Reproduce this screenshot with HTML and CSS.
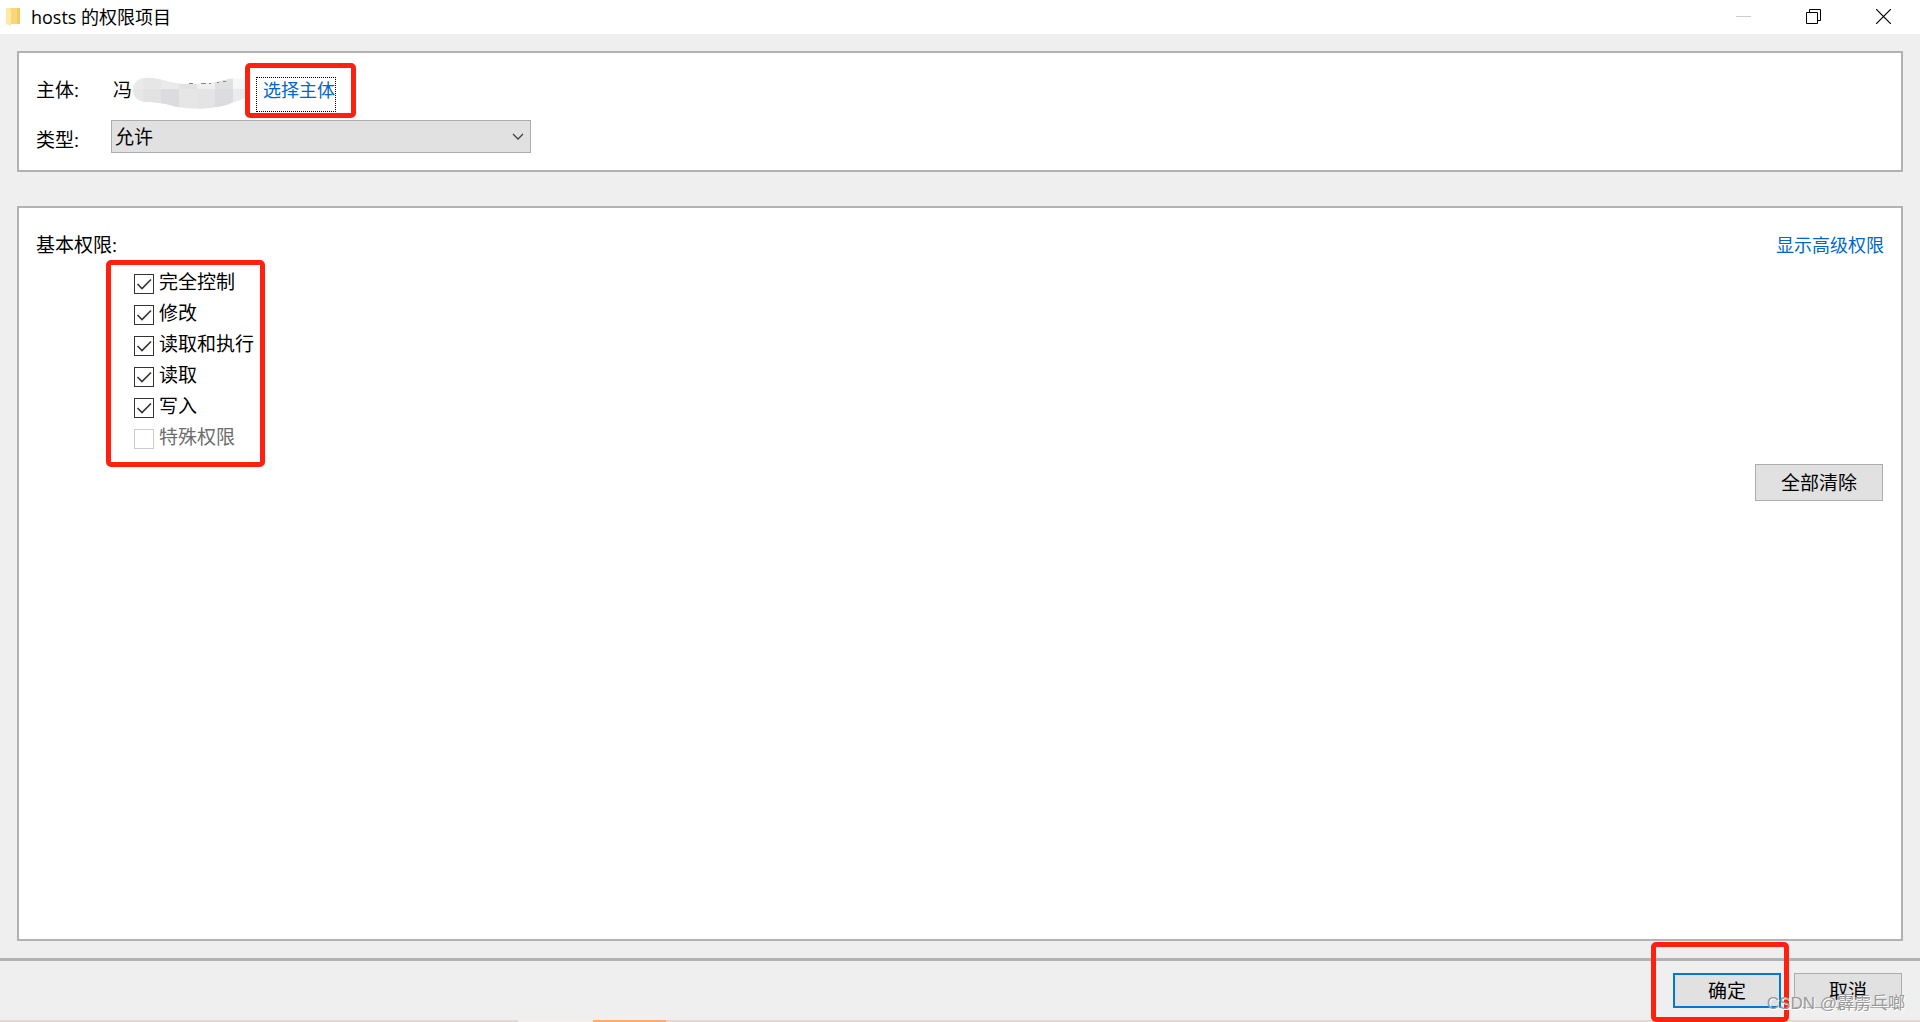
FILE: index.html
```html
<!DOCTYPE html>
<html lang="zh-CN">
<head>
<meta charset="utf-8">
<meta name="viewport" content="width=device-width, initial-scale=1">
<title>hosts 的权限项目</title>
<link rel="stylesheet" href="styles.css">
</head>
<body>
<header class="titlebar">
  <svg class="folder" width="14" height="20" viewBox="0 0 14 20" aria-hidden="true">
    <path d="M4 1h10v16H4z" fill="#f8d775"/>
    <path d="M11 1h3v16h-3z" fill="#f3cb62"/>
    <path d="M0 1h4l1 3v15l-5-2z" fill="#ffe9a6"/>
  </svg>
  <h1 class="title">hosts 的权限项目</h1>
  <div class="window-buttons">
    <button class="window-button" type="button" aria-label="最小化" disabled>
      <svg width="15" height="15" viewBox="0 0 15 15"><path d="M0 7.5h15" stroke="#ccc"/></svg>
    </button>
    <button class="window-button" type="button" aria-label="还原">
      <svg width="15" height="15" viewBox="0 0 15 15" fill="none" stroke="#000"><path d="M.5 3.500h11v11h-11zM3.500 3.500v-3h11v11h-3"/></svg>
    </button>
    <button class="window-button" type="button" aria-label="关闭">
      <svg width="15" height="15" viewBox="0 0 15 15"><path d="M0 0l15 15M15 0L0 15" stroke="#000" stroke-width="1.200"/></svg>
    </button>
  </div>
</header>

<main class="content">
  <section class="panel principal">
    <div class="row principal-row">
      <span class="label">主体:</span>
      <span class="name">冯
        <svg class="mosaic" width="118" height="32" viewBox="0 0 118 32" aria-hidden="true">
          <clipPath id="smear"><path d="M12 1C26-1 35 7 52 7S78 7 92 3C102 0 117 2 117 12C117 22 104 23 96 27C84 32 52 33 40 29C30 26 24 25 12 25C-4 24-4 2 12 1z"/></clipPath>
          <g clip-path="url(#smear)">
            <path d="M0 0h118v32H0z" fill="#e6e6e6"/>
            <path d="M0 0h10v12H0zM28 0h18v12H28z" fill="#eaeaea"/>
            <path d="M10 12h18v20H10zM46 0h18v12H46z" fill="#e2e2e2"/>
            <path d="M28 12h18v20H28zM82 12h18v20H82z" fill="#dcdcde"/>
            <path d="M64 12h18v20H64z" fill="#e4e4e4"/>
            <path d="M64 0h18v12H64z" fill="#efefef"/>
            <path d="M82 0h18v12H82z" fill="#e0e0e0"/>
            <path d="M100 0h18v12h-18z" fill="#f6f8f8"/>
            <path d="M100 12h18v20h-18z" fill="#e9ebed"/>
          </g>
          <path d="M56 6.500h4m8 0h5m3 0h2m6-1h2m4-1h3" stroke="#888"/>
        </svg>
      </span>
      <span class="marked"><a class="link focused" href="#principal">选择主体</a></span>
    </div>
    <div class="row">
      <label class="label type-label" for="type">类型:</label>
      <span class="select-box">
        <select id="type"><option>允许</option><option>拒绝</option></select>
        <svg class="chevron" width="12" height="8" viewBox="0 0 12 8" fill="none"><path d="M1 1l5 5 5-5" stroke="#404040" stroke-width="1.300"/></svg>
      </span>
    </div>
  </section>

  <section class="panel permissions">
    <div class="heading">
      <h2 class="subtitle">基本权限:</h2>
      <a class="link" href="#advanced">显示高级权限</a>
    </div>
    <div class="checks">
      <label class="check"><input type="checkbox" checked>完全控制</label>
      <label class="check"><input type="checkbox" checked>修改</label>
      <label class="check"><input type="checkbox" checked>读取和执行</label>
      <label class="check"><input type="checkbox" checked>读取</label>
      <label class="check"><input type="checkbox" checked>写入</label>
      <label class="check off"><input type="checkbox" disabled>特殊权限</label>
    </div>
    <button class="button clear" type="button">全部清除</button>
  </section>
</main>

<footer class="footer">
  <div class="actions">
    <span class="marked-button"><button class="button primary" type="button">确定</button></span>
    <button class="button" type="button">取消</button>
  </div>
  <span class="watermark">CSDN @霹雳乓啷</span>
  <div class="strip"><i class="strip-light"></i><i class="strip-orange"></i></div>
</footer>
</body>
</html>
```
FILE: styles.css
```css
* {
  box-sizing: border-box;
}

body {
  margin: 0;
  min-height: 100vh;
  display: flex;
  flex-direction: column;
  background: #efefef;
  color: #000;
  font: 19px/24px "Open Sans", "Noto Sans CJK SC", sans-serif;
}

button,
select,
input {
  font: inherit;
  color: inherit;
  margin: 0;
}

.titlebar {
  display: flex;
  align-items: flex-start;
  height: 34px;
  padding: 0 1px 0 6px;
  background: #fff;
}

.folder {
  margin: 7px 11px 0 0;
}

.title {
  margin: 5px 0 0;
  font-size: 18px;
  font-weight: 400;
}

.window-buttons {
  display: flex;
  margin-left: auto;
}

.window-button {
  display: flex;
  align-items: center;
  justify-content: center;
  width: 70px;
  height: 33px;
  padding: 0 1px 0 0;
  border: 0;
  background: none;
}

.content {
  flex: 1;
  display: flex;
  flex-direction: column;
  gap: 34px;
  padding: 17px;
}

.panel {
  border: 2px solid #b2b2b2;
  background: #fff;
}

.principal {
  display: flex;
  flex-direction: column;
  gap: 8px;
  padding: 24px 17px 17px;
}

.row {
  display: flex;
}

.principal-row {
  line-height: 26px;
}

.label {
  width: 75px;
}

.type-label {
  padding-top: 8px;
}

.name {
  position: relative;
  width: 145px;
  padding-left: 2px;
}

.mosaic {
  position: absolute;
  left: 22px;
  top: 0;
}

.link {
  color: #0066cc;
  font-size: 18px;
  text-decoration: none;
}

.marked {
  position: relative;
}

.marked::before {
  content: "";
  position: absolute;
  inset: -14px -20px -6px -11px;
  border: 5px solid #ff2010;
  border-radius: 5px;
  pointer-events: none;
}

.focused {
  display: block;
  height: 35px;
  padding-left: 6px;
  border: 1px dotted #000;
  line-height: 24px;
}

.select-box {
  position: relative;
  width: 420px;
  height: 33px;
}

.select-box select {
  display: block;
  width: 100%;
  height: 100%;
  padding: 0 3px;
  appearance: none;
  border: 1px solid #adadad;
  border-radius: 0;
  background: #e1e1e1;
}

.chevron {
  position: absolute;
  right: 7px;
  top: 13px;
}

.permissions {
  flex: 1;
  display: flex;
  flex-direction: column;
  padding: 25px 17px 17px;
}

.heading {
  display: flex;
  justify-content: space-between;
}

.subtitle {
  margin: 0;
  font-size: 19px;
  font-weight: inherit;
}

.checks {
  position: relative;
  align-self: flex-start;
  margin: 12px 0 0 98px;
}

.checks::before {
  content: "";
  position: absolute;
  inset: -9px -11px -12px -28px;
  border: 5px solid #ff2010;
  border-radius: 5px;
  pointer-events: none;
}

.check {
  display: flex;
  gap: 5px;
  height: 31px;
  line-height: 26px;
}

.check input {
  width: 20px;
  height: 20px;
  margin-top: 5px;
  appearance: none;
  border: 1px solid #333;
  background: #fff;
}

.check input:checked {
  background: url("data:image/svg+xml,%3Csvg xmlns='http://www.w3.org/2000/svg' viewBox='0 0 18 18' fill='none' stroke='%23333' stroke-width='1.600'%3E%3Cpath d='M2.500 9l4.500 4.500L16 4.500'/%3E%3C/svg%3E");
}

.check.off {
  color: #6d6d6d;
}

.check.off input {
  border-color: #ccc;
}

.button {
  width: 108px;
  height: 35px;
  padding: 0;
  border: 1px solid #adadad;
  background: #e1e1e1;
}

.clear {
  align-self: flex-end;
  width: 128px;
  height: 37px;
  margin-top: 9px;
  margin-right: 1px;
}

.footer {
  position: relative;
  display: flex;
  flex-direction: column;
  gap: 12px;
  border-top: 3px solid #b2b2b2;
}

.actions {
  display: flex;
  justify-content: flex-end;
  gap: 13px;
  padding: 12px 18px 0 0;
}

.marked-button {
  position: relative;
}

.marked-button::before {
  content: "";
  position: absolute;
  inset: -31px -8px -14px -22px;
  border: 5px solid #ff2010;
  border-radius: 5px;
  pointer-events: none;
}

.primary {
  display: block;
  border: 2px solid #0078d7;
}

.watermark {
  position: absolute;
  right: 15px;
  bottom: 6px;
  color: #999;
  font-family: "Liberation Sans", "Noto Sans CJK SC", sans-serif;
  font-size: 17px;
  text-shadow: 1px 1px 0 #fff;
  pointer-events: none;
}

.strip {
  display: flex;
  height: 2px;
  padding-left: 27%;
  background: #e6d6d6;
}

.strip-light {
  width: 75px;
  background: #f5efe9;
}

.strip-orange {
  width: 73px;
  background: #ffab73;
}
```
